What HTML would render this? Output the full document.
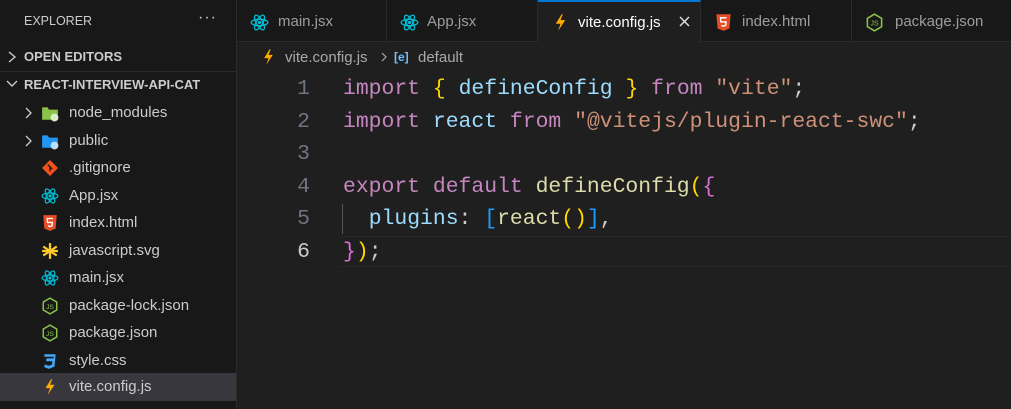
<!DOCTYPE html>
<html><head><style>
*{margin:0;padding:0;box-sizing:border-box}
body{width:1011px;height:409px;overflow:hidden;background:#1f1f1f;font-family:"Liberation Sans","DejaVu Sans",sans-serif;position:relative;color:#ccc}
.side{position:absolute;left:0;top:0;width:237px;height:409px;background:#181818;border-right:1px solid #2b2b2b}
.abs{position:absolute;white-space:nowrap}
.row{position:absolute;left:0;width:236px;height:27px;font-size:15px;color:#cccccc;line-height:28px}
.row .ic{position:absolute;left:41px;top:5px;width:18px;height:18px}
.row .t{position:absolute;left:69px}
.sel{background:#37373d}
.tabs{position:absolute;left:237px;top:0;width:774px;height:42px;background:#181818;border-bottom:1px solid #2b2b2b}
.tab{position:absolute;top:0;height:42px;border-right:1px solid #2b2b2b;font-size:15px;color:#9d9d9d;line-height:43px}
.tab svg{position:absolute;top:13px}
.code{position:absolute;font-family:"Liberation Mono","DejaVu Sans Mono",monospace;font-size:21.4px;white-space:pre;line-height:32.6px}
.ln{position:absolute;left:280px;width:30px;text-align:right;font-family:"Liberation Mono",monospace;font-size:21.4px;color:#6e7681;line-height:32.6px}
.k{color:#c586c0}.v{color:#9cdcfe}.s{color:#ce9178}.f{color:#dcdcaa}.y{color:#ffd700}.p{color:#da70d6}.b{color:#179fff}.w{color:#cccccc}
</style></head><body>
<div class="side">
<div class="abs" style="left:24px;top:14px;font-size:12.5px;color:#cccccc">EXPLORER</div>
<div class="abs" style="left:198px;top:9px;font-size:16px;color:#ccc;letter-spacing:1px">···</div>
<svg class="abs" style="left:6px;top:50px" width="12" height="14"><path d="M3 2l6 5-6 5" stroke="#ccc" stroke-width="1.4" fill="none"/></svg>
<div class="abs" style="left:24px;top:49px;font-size:13px;font-weight:bold;color:#cccccc">OPEN EDITORS</div>
<div class="abs" style="left:0;top:71px;width:237px;height:1px;background:#2b2b2b"></div>
<svg class="abs" style="left:5px;top:78px" width="14" height="12"><path d="M2 3l5 5 5-5" stroke="#ccc" stroke-width="1.4" fill="none"/></svg>
<div class="abs" style="left:24px;top:77px;font-size:13px;font-weight:bold;color:#cccccc">REACT-INTERVIEW-API-CAT</div>

<div class="row" style="top:99px"><svg class="abs" style="left:24px;top:7px" width="10" height="14"><path d="M2 2l5 5-5 5" stroke="#ccc" stroke-width="1.3" fill="none"/></svg><svg class="ic" viewBox="0 0 16 16"><path d="M1 3h5l1 2h8v9H1z" fill="#8bc34a"/><circle cx="12" cy="12" r="3.5" fill="#dcedc8"/></svg><span class="t">node_modules</span></div>
<div class="row" style="top:127px"><svg class="abs" style="left:24px;top:7px" width="10" height="14"><path d="M2 2l5 5-5 5" stroke="#ccc" stroke-width="1.3" fill="none"/></svg><svg class="ic" viewBox="0 0 16 16"><path d="M1 3h5l1 2h8v9H1z" fill="#2196f3"/><circle cx="12" cy="12" r="3.5" fill="#bbdefb"/></svg><span class="t">public</span></div>
<div class="row" style="top:154px"><svg class="ic" viewBox="0 0 16 16"><rect x="3" y="3" width="10" height="10" transform="rotate(45 8 8)" fill="#f4511e"/><path d="M6 5l4 4M8 7v4" stroke="#181818" stroke-width="1.2"/></svg><span class="t">.gitignore</span></div>
<div class="row" style="top:182px"><svg class="ic" viewBox="0 0 16 16"><g fill="none" stroke="#00bcd4" stroke-width="1.1"><ellipse cx="8" cy="8" rx="7" ry="2.7"/><ellipse cx="8" cy="8" rx="7" ry="2.7" transform="rotate(60 8 8)"/><ellipse cx="8" cy="8" rx="7" ry="2.7" transform="rotate(120 8 8)"/></g><circle cx="8" cy="8" r="1.4" fill="#00bcd4"/></svg><span class="t">App.jsx</span></div>
<div class="row" style="top:209px"><svg class="ic" viewBox="0 0 16 16"><path d="M2 1h12l-1 12-5 2-5-2z" fill="#e44d26"/><path d="M10.5 4H5.5l.3 3.5h4.3l-.3 3-1.8.6-1.8-.6" stroke="#fff" stroke-width="1.2" fill="none"/></svg><span class="t">index.html</span></div>
<div class="row" style="top:237px"><svg class="ic" viewBox="0 0 16 16"><path d="M8 1v14M2 4l12 8M14 4L2 12M1 8h14" stroke="#ffca28" stroke-width="2"/></svg><span class="t">javascript.svg</span></div>
<div class="row" style="top:264px"><svg class="ic" viewBox="0 0 16 16"><g fill="none" stroke="#00bcd4" stroke-width="1.1"><ellipse cx="8" cy="8" rx="7" ry="2.7"/><ellipse cx="8" cy="8" rx="7" ry="2.7" transform="rotate(60 8 8)"/><ellipse cx="8" cy="8" rx="7" ry="2.7" transform="rotate(120 8 8)"/></g><circle cx="8" cy="8" r="1.4" fill="#00bcd4"/></svg><span class="t">main.jsx</span></div>
<div class="row" style="top:292px"><svg class="ic" viewBox="0 0 16 16"><path d="M8 1l6 3.5v7L8 15l-6-3.5v-7z" fill="none" stroke="#8bc34a" stroke-width="1.3"/><text x="8" y="10.5" font-size="6" fill="#8bc34a" text-anchor="middle" font-family="Liberation Sans">JS</text></svg><span class="t">package-lock.json</span></div>
<div class="row" style="top:319px"><svg class="ic" viewBox="0 0 16 16"><path d="M8 1l6 3.5v7L8 15l-6-3.5v-7z" fill="none" stroke="#8bc34a" stroke-width="1.3"/><text x="8" y="10.5" font-size="6" fill="#8bc34a" text-anchor="middle" font-family="Liberation Sans">JS</text></svg><span class="t">package.json</span></div>
<div class="row" style="top:347px"><svg class="ic" viewBox="0 0 16 16"><path d="M3 2h10l-1 11-5 2-4-1.5.3-2.5 3.5 1.2 3-1 .3-3H4.5l.3-2.5h6.3l.2-1.5H3z" fill="#42a5f5"/></svg><span class="t">style.css</span></div>
<div class="row sel" style="top:373px;height:28px"><svg class="ic" viewBox="0 0 16 16"><path d="M9 1L4 9h4l-2 6 6-9H8l2-5z" fill="#ffab00"/></svg><span class="t">vite.config.js</span></div>
</div>

<div class="tabs">
<div class="tab" style="left:0;width:150px"><svg style="left:13px" width="19" height="19" viewBox="0 0 16 16"><g fill="none" stroke="#00bcd4" stroke-width="1.1"><ellipse cx="8" cy="8" rx="7" ry="2.7"/><ellipse cx="8" cy="8" rx="7" ry="2.7" transform="rotate(60 8 8)"/><ellipse cx="8" cy="8" rx="7" ry="2.7" transform="rotate(120 8 8)"/></g><circle cx="8" cy="8" r="1.4" fill="#00bcd4"/></svg><span style="position:absolute;left:41px">main.jsx</span></div>
<div class="tab" style="left:150px;width:151px"><svg style="left:13px" width="19" height="19" viewBox="0 0 16 16"><g fill="none" stroke="#00bcd4" stroke-width="1.1"><ellipse cx="8" cy="8" rx="7" ry="2.7"/><ellipse cx="8" cy="8" rx="7" ry="2.7" transform="rotate(60 8 8)"/><ellipse cx="8" cy="8" rx="7" ry="2.7" transform="rotate(120 8 8)"/></g><circle cx="8" cy="8" r="1.4" fill="#00bcd4"/></svg><span style="position:absolute;left:40px">App.jsx</span></div>
<div class="tab" style="left:301px;width:163px;background:#1f1f1f;border-top:2px solid #0078d4;color:#fff;height:43px;line-height:41px"><svg style="left:13px;top:11px" width="19" height="19" viewBox="0 0 16 16"><path d="M9 1L4 9h4l-2 6 6-9H8l2-5z" fill="#ffab00"/></svg><span style="position:absolute;left:40px">vite.config.js</span><svg style="left:140px;top:13px" width="13" height="13"><path d="M2 2l9 9M11 2l-9 9" stroke="#ddd" stroke-width="1.5"/></svg></div>
<div class="tab" style="left:464px;width:151px"><svg style="left:13px" width="19" height="19" viewBox="0 0 16 16"><path d="M2 1h12l-1 12-5 2-5-2z" fill="#e44d26"/><path d="M10.5 4H5.5l.3 3.5h4.3l-.3 3-1.8.6-1.8-.6" stroke="#fff" stroke-width="1.2" fill="none"/></svg><span style="position:absolute;left:41px">index.html</span></div>
<div class="tab" style="left:615px;width:159px;border-right:none"><svg style="left:13px" width="19" height="19" viewBox="0 0 16 16"><path d="M8 1l6 3.5v7L8 15l-6-3.5v-7z" fill="none" stroke="#8bc34a" stroke-width="1.3"/><text x="8" y="10.5" font-size="6" fill="#8bc34a" text-anchor="middle" font-family="Liberation Sans">JS</text></svg><span style="position:absolute;left:43px">package.json</span></div>
</div>

<svg class="abs" style="left:262px;top:48px" width="13" height="18" viewBox="0 0 12 16"><path d="M7 1L2 9h4l-2 6 6-9H6l2-5z" fill="#ffab00"/></svg>
<div class="abs" style="left:285px;top:49px;font-size:15px;color:#a9a9a9">vite.config.js</div>
<svg class="abs" style="left:380px;top:51px" width="8" height="12"><path d="M2 2l4 4-4 4" stroke="#aaa" stroke-width="1.2" fill="none"/></svg>
<div class="abs" style="left:394px;top:50px;font-size:12px;color:#75beff;font-weight:bold">[e]</div>
<div class="abs" style="left:418px;top:49px;font-size:15px;color:#a9a9a9">default</div>

<div class="abs" style="left:340px;top:236px;width:671px;height:31px;border-top:1px solid #282828;border-bottom:1px solid #282828"></div>
<div class="abs" style="left:342px;top:204px;width:1px;height:30px;background:#555"></div>

<div class="ln" style="top:73px">1</div>
<div class="ln" style="top:105.6px">2</div>
<div class="ln" style="top:138.2px">3</div>
<div class="ln" style="top:170.8px">4</div>
<div class="ln" style="top:203.4px">5</div>
<div class="ln" style="top:236px;color:#ccc">6</div>

<div class="code" style="left:343px;top:73px"><span class="k">import</span> <span class="y">{</span> <span class="v">defineConfig</span> <span class="y">}</span> <span class="k">from</span> <span class="s">"vite"</span><span class="w">;</span>
<span class="k">import</span> <span class="v">react</span> <span class="k">from</span> <span class="s">"@vitejs/plugin-react-swc"</span><span class="w">;</span>

<span class="k">export</span> <span class="k">default</span> <span class="f">defineConfig</span><span class="y">(</span><span class="p">{</span>
  <span class="v">plugins</span><span class="w">:</span> <span class="b">[</span><span class="f">react</span><span class="y">()</span><span class="b">]</span><span class="w">,</span>
<span class="p">}</span><span class="y">)</span><span class="w">;</span></div>
</body></html>
